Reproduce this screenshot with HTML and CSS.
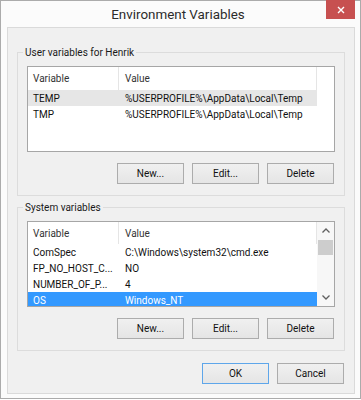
FILE: index.html
```html
<!DOCTYPE html>
<html lang="en">
<head>
    <meta charset="UTF-8">
    <title>Environment Variables</title>
    <link rel="stylesheet" href="styles.css">
</head>
<body>
    <div class="window">
        <div class="title-bar">
            <span class="title">Environment Variables</span>
            <button class="close-btn" aria-label="Close">
                <svg width="8" height="8" viewBox="0 0 8 8"><path d="M1 1L7 7M7 1L1 7" stroke="#fff" stroke-width="1.4"/></svg>
            </button>
        </div>

        <div class="client">
            <!-- Переменные пользователя -->
            <fieldset class="group">
                <legend>User variables for Henrik</legend>
                <div class="list">
                    <div class="list-main">
                        <div class="list-head">
                            <div class="col-var">Variable</div>
                            <div class="col-val">Value</div>
                        </div>
                        <div class="row row-inactive">
                            <div class="col-var">TEMP</div>
                            <div class="col-val">%USERPROFILE%\AppData\Local\Temp</div>
                        </div>
                        <div class="row">
                            <div class="col-var">TMP</div>
                            <div class="col-val">%USERPROFILE%\AppData\Local\Temp</div>
                        </div>
                    </div>
                </div>
                <div class="buttons">
                    <button class="btn">New...</button>
                    <button class="btn">Edit...</button>
                    <button class="btn">Delete</button>
                </div>
            </fieldset>

            <!-- Системные переменные -->
            <fieldset class="group group-system">
                <legend>System variables</legend>
                <div class="list">
                    <div class="list-main">
                        <div class="list-head list-head-short">
                            <div class="col-var">Variable</div>
                            <div class="col-val">Value</div>
                        </div>
                        <div class="row">
                            <div class="col-var">ComSpec</div>
                            <div class="col-val">C:\Windows\system32\cmd.exe</div>
                        </div>
                        <div class="row">
                            <div class="col-var">FP_NO_HOST_C...</div>
                            <div class="col-val">NO</div>
                        </div>
                        <div class="row">
                            <div class="col-var">NUMBER_OF_P...</div>
                            <div class="col-val">4</div>
                        </div>
                        <div class="row row-selected">
                            <div class="col-var">OS</div>
                            <div class="col-val">Windows_NT</div>
                        </div>
                    </div>
                    <div class="scrollbar">
                        <div class="scroll-arrow">
                            <svg width="8" height="5" viewBox="0 0 8 5"><path d="M0.5 4.5L4 1L7.5 4.5" fill="none" stroke="#606060" stroke-width="1.3"/></svg>
                        </div>
                        <div class="scroll-track">
                            <div class="scroll-thumb"></div>
                        </div>
                        <div class="scroll-arrow">
                            <svg width="8" height="5" viewBox="0 0 8 5"><path d="M0.5 0.5L4 4L7.5 0.5" fill="none" stroke="#606060" stroke-width="1.3"/></svg>
                        </div>
                    </div>
                </div>
                <div class="buttons">
                    <button class="btn">New...</button>
                    <button class="btn">Edit...</button>
                    <button class="btn">Delete</button>
                </div>
            </fieldset>

            <div class="buttons dialog-buttons">
                <button class="btn btn-default">OK</button>
                <button class="btn">Cancel</button>
            </div>
        </div>
    </div>
</body>
</html>
```
FILE: styles.css
```css
body {
    margin: 0;
    background: #ffffff;
    font-family: Roboto, "Liberation Sans", sans-serif;
    font-size: 10px;
    color: #1a1a1a;
}

.window {
    width: 361px;
    height: 399px;
    box-sizing: border-box;
    border: 1px solid #ababab;
    background: #fbfbfb;
    padding: 0 5px 4px 6px;
    display: flex;
    flex-direction: column;
}

/* Заголовок окна */
.title-bar {
    height: 26px;
    display: grid;
    grid-template-columns: 1fr auto 1fr;
    align-items: center;
    margin: 0 -5px 0 -6px;
    padding-right: 5px;
}

.title {
    grid-column: 2;
    font-size: 13.4px;
    color: #2b2b2b;
}

.close-btn {
    grid-column: 3;
    justify-self: end;
    align-self: start;
    width: 29px;
    height: 19px;
    margin-top: -1px;
    border: none;
    padding: 0;
    background: #c75050;
    display: flex;
    align-items: center;
    justify-content: center;
}

.client {
    flex: 1;
    border: 1px solid #dadada;
    background: #f0f0f0;
    padding: 18px 9px 0;
    display: flex;
    flex-direction: column;
}

/* Группы */
.group {
    margin: 0;
    border: 1px solid #dcdcdc;
    padding: 7px 9px 11px;
    min-width: 0;
}

.group-system {
    margin-top: 5px;
}

.group legend {
    margin-left: -4px;
    padding: 0 2px;
    line-height: 13px;
    font-size: 10px;
}

/* Список переменных */
.list {
    height: 86px;
    box-sizing: border-box;
    border: 1px solid #a6a6a6;
    background: #ffffff;
    display: flex;
    overflow: hidden;
}

.list-main {
    flex: 1;
}

.list-head {
    height: 23px;
    display: flex;
    align-items: stretch;
    color: #333333;
}

.list-head-short {
    height: 22px;
}

.list-head .col-var,
.list-head .col-val {
    display: flex;
    align-items: center;
    border-right: 1px solid #e5e5e5;
}

.col-var {
    width: 90px;
    padding-left: 5px;
    box-sizing: border-box;
    white-space: nowrap;
    overflow: hidden;
}

.list-head .col-var {
    width: 91px;
}

.col-val {
    width: 198px;
    padding-left: 6px;
    box-sizing: border-box;
    white-space: nowrap;
}

.row {
    height: 16px;
    width: 289px;
    display: flex;
    align-items: center;
    color: #111111;
}

.row .col-var {
    width: 91px;
}

.row-inactive {
    background: #e6e6e6;
}

.row-selected {
    background: #3399ff;
    color: #ffffff;
}

/* Полоса прокрутки */
.scrollbar {
    width: 17px;
    background: #f7f7f7;
    display: flex;
    flex-direction: column;
}

.scroll-arrow {
    height: 17px;
    display: flex;
    align-items: center;
    justify-content: center;
}

.scroll-track {
    flex: 1;
    padding: 1px 1px 0;
}

.scroll-thumb {
    height: 15px;
    background: #cdcdcd;
}

/* Кнопки */
.buttons {
    display: flex;
    justify-content: flex-end;
    gap: 8px;
    margin-top: 11px;
    padding-right: 1px;
}

.btn {
    width: 67px;
    height: 21px;
    box-sizing: border-box;
    border: 1px solid #acacac;
    background: linear-gradient(#f0f0f0, #e5e5e5);
    font-family: Roboto, "Liberation Sans", sans-serif;
    font-size: 10px;
    color: #111111;
    padding: 0;
}

.btn-default {
    border-color: #5ea6ea;
}

.dialog-buttons {
    margin-top: 12px;
    padding-right: 1px;
}
```
